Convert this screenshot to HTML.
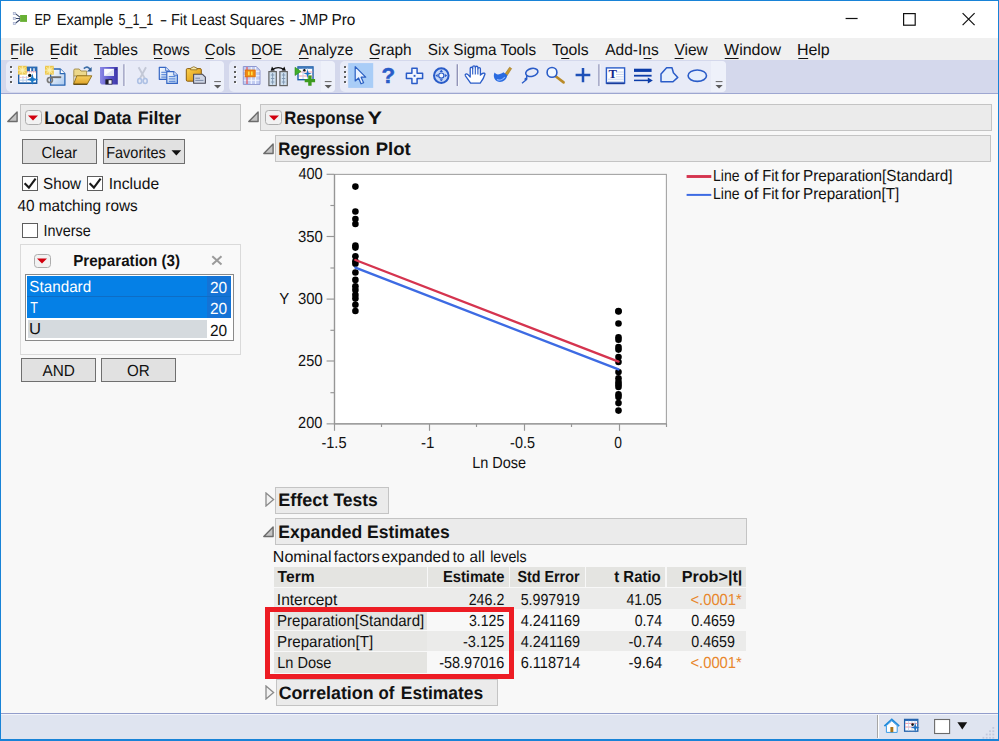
<!DOCTYPE html>
<html lang="en"><head><meta charset="utf-8"><title>EP Example 5_1_1 - Fit Least Squares - JMP Pro</title>
<style>
html,body{margin:0;padding:0}
body{width:999px;height:741px;overflow:hidden;position:relative;background:#f8f8f8;font-family:"Liberation Sans", sans-serif;}
#w{position:absolute;left:0;top:0;width:999px;height:741px;overflow:hidden}
#w div,#w svg{position:absolute;box-sizing:border-box}
.t{position:absolute;left:0;white-space:nowrap;line-height:20px;height:20px;transform-origin:0 0;text-rendering:geometricPrecision}
.t u{text-decoration:underline;text-decoration-thickness:1px;text-underline-offset:2.5px}
</style></head><body><div id="w">
<div style="left:0px;top:0px;width:999px;height:38px;background:#fff"></div>
<div style="left:0px;top:38px;width:999px;height:22px;background:#f0f0f0"></div>
<div style="left:0px;top:60px;width:999px;height:34px;background:#d4d8ec;border-bottom:1px solid #9ea7d1"></div>
<div style="left:6px;top:61px;width:218px;height:31px;background:#e8ebf7;border-radius:5px"></div>
<div style="left:210px;top:61px;width:14px;height:31px;background:#eef1fa;border-radius:0 4px 4px 0"></div>
<div style="left:10px;top:66px;width:2px;height:2px;background:#5e5e5e;box-shadow:1px 1px 0 #fbfbfe"></div>
<div style="left:10px;top:71px;width:2px;height:2px;background:#5e5e5e;box-shadow:1px 1px 0 #fbfbfe"></div>
<div style="left:10px;top:76px;width:2px;height:2px;background:#5e5e5e;box-shadow:1px 1px 0 #fbfbfe"></div>
<div style="left:10px;top:81px;width:2px;height:2px;background:#5e5e5e;box-shadow:1px 1px 0 #fbfbfe"></div>
<svg style="left:213px;top:79px" width="11" height="11" viewBox="0 0 11 11"><rect x="1.20" y="2" width="6.8" height="1.1" fill="#707070"/><path d="M1.00 5.9h7.2l-3.6 3.6z" fill="#5c5c5c"/></svg>
<div style="left:229px;top:61px;width:106px;height:31px;background:#e8ebf7;border-radius:5px"></div>
<div style="left:321px;top:61px;width:14px;height:31px;background:#eef1fa;border-radius:0 4px 4px 0"></div>
<div style="left:234px;top:66px;width:2px;height:2px;background:#5e5e5e;box-shadow:1px 1px 0 #fbfbfe"></div>
<div style="left:234px;top:71px;width:2px;height:2px;background:#5e5e5e;box-shadow:1px 1px 0 #fbfbfe"></div>
<div style="left:234px;top:76px;width:2px;height:2px;background:#5e5e5e;box-shadow:1px 1px 0 #fbfbfe"></div>
<div style="left:234px;top:81px;width:2px;height:2px;background:#5e5e5e;box-shadow:1px 1px 0 #fbfbfe"></div>
<svg style="left:323px;top:79px" width="11" height="11" viewBox="0 0 11 11"><rect x="1.80" y="2" width="6.8" height="1.1" fill="#707070"/><path d="M1.60 5.9h7.2l-3.6 3.6z" fill="#5c5c5c"/></svg>
<div style="left:340px;top:61px;width:386px;height:31px;background:#e8ebf7;border-radius:5px"></div>
<div style="left:711px;top:61px;width:15px;height:31px;background:#eef1fa;border-radius:0 4px 4px 0"></div>
<div style="left:344px;top:66px;width:2px;height:2px;background:#5e5e5e;box-shadow:1px 1px 0 #fbfbfe"></div>
<div style="left:344px;top:71px;width:2px;height:2px;background:#5e5e5e;box-shadow:1px 1px 0 #fbfbfe"></div>
<div style="left:344px;top:76px;width:2px;height:2px;background:#5e5e5e;box-shadow:1px 1px 0 #fbfbfe"></div>
<div style="left:344px;top:81px;width:2px;height:2px;background:#5e5e5e;box-shadow:1px 1px 0 #fbfbfe"></div>
<svg style="left:714px;top:79px" width="11" height="11" viewBox="0 0 11 11"><rect x="1.70" y="2" width="6.8" height="1.1" fill="#707070"/><path d="M1.50 5.9h7.2l-3.6 3.6z" fill="#5c5c5c"/></svg>
<div style="left:0px;top:713px;width:999px;height:28px;background:#dfe4f0;border-top:1px solid #929dcb"></div>
<div style="left:0px;top:714px;width:999px;height:1px;background:#f3f5fb"></div>
<div style="left:877px;top:715px;width:1px;height:23px;background:#a6a6a6"></div>
<div style="left:878px;top:715px;width:1px;height:23px;background:#fff"></div>
<svg style="left:0;top:60px" width="999" height="33" viewBox="0 60 999 33"><defs><linearGradient id="gPage" x1="0" y1="0" x2="1" y2="1"><stop offset="0" stop-color="#ffffff"/><stop offset="1" stop-color="#a9c8ee"/></linearGradient><linearGradient id="gFold" x1="0" y1="0" x2="0" y2="1"><stop offset="0" stop-color="#f6d062"/><stop offset="1" stop-color="#dfa227"/></linearGradient><linearGradient id="gFlop" x1="0" y1="0" x2="1" y2="0"><stop offset="0" stop-color="#8d8ae6"/><stop offset=".55" stop-color="#5a55cc"/><stop offset="1" stop-color="#3b35a6"/></linearGradient><linearGradient id="gClip" x1="0" y1="0" x2="1" y2="1"><stop offset="0" stop-color="#fbd04f"/><stop offset="1" stop-color="#d9930a"/></linearGradient><radialGradient id="gStar"><stop offset="0" stop-color="#fffbe0"/><stop offset=".5" stop-color="#f4da78"/><stop offset="1" stop-color="#ecc448"/></radialGradient></defs><rect x="348.2" y="63.1" width="25" height="24.8" fill="#a9cdf7"/><rect x="18.7" y="67.3" width="18" height="16" fill="#fff" stroke="#1f5fa9" stroke-width="1.4"/><rect x="26.5" y="67" width="10.2" height="4.3" fill="#2a6bb6"/><path d="M30.6 68.2V71.3M34 68.2V71.3" stroke="#fff" stroke-width="1.3"/><path d="M26.8 71.9H36" stroke="#ef7f8e" stroke-width="1" stroke-dasharray="1.2 .8"/><path d="M19.5 77.4H29" stroke="#f29aa6" stroke-width="1" stroke-dasharray="1.2 .8"/><path d="M19.5 80.2H29M23 76V82.5M26.4 76V82.5" stroke="#b9cdea" stroke-width="1"/><path d="M19 83.2H36.8" stroke="#1c5aa2" stroke-width="1.2"/><rect x="18" y="65.8" width="8.8" height="8.8" fill="url(#gStar)"/><path d="M22.4 65.8V74.6M18 70.2H26.8M18.8 66.6L26 73.8M26 66.6L18.8 73.8" stroke="#fdf0b0" stroke-width=".9" opacity=".85"/><circle cx="29.7" cy="75.4" r="1.7" fill="#111"/><path d="M32.4 73.4L33.6 78.1L38.2 79.5L33.6 80.9L32.2 84.8L31 80.9L27 79.5L31 78.1Z" fill="#1c7ac8"/><path d="M50.6 69H60.2L64.9 73.6V85.2H50.6Z" fill="url(#gPage)" stroke="#2a66b3" stroke-width="1.3" stroke-linejoin="round"/><path d="M60.2 69V73.6H64.9" fill="#fff" stroke="#2a66b3" stroke-width="1.1"/><rect x="45" y="65.8" width="8.8" height="8.8" fill="url(#gStar)"/><path d="M49.4 65.8V74.6M45 70.2H53.8M45.8 66.6L53 73.8M53 66.6L45.8 73.8" stroke="#fdf0b0" stroke-width=".9" opacity=".85"/><circle cx="49.9" cy="80" r="2.5" fill="none" stroke="#7a7a7a" stroke-width="1.7"/><path d="M51 77.2H61.2" stroke="#6c6c6c" stroke-width="1.9"/><path d="M73.8 84V70.3Q73.8 69 75 69H79.2L81 71H86.6V76H73.8" fill="#ecd88c" stroke="#a08a48" stroke-width=".9"/><path d="M76.8 75.8H91.8L87.2 84.2H73.6Z" fill="url(#gFold)" stroke="#8a6a14" stroke-width=".9" stroke-linejoin="round"/><path d="M73.6 84.3H87.2" stroke="#5c4712" stroke-width="1.2"/><path d="M83.8 68.6Q87.4 65.4 90 69.2" fill="none" stroke="#3d6ea8" stroke-width="1.6"/><path d="M91.6 66.9V71.6H86.9Z" fill="#2f5f98"/><path d="M100 67H117.8V84.5H101.6L100 83Z" fill="url(#gFlop)"/><rect x="104.1" y="68.8" width="9.9" height="7.1" fill="#fbfbff"/><path d="M104.1 75.9L114 68.8V75.9Z" fill="#dfe3f3"/><rect x="105.4" y="79.3" width="6.9" height="5.2" fill="#1e1e2c"/><rect x="108.6" y="80.2" width="3" height="3.6" fill="#f2f2fa"/><rect x="115.4" y="68.6" width="1.3" height="1.6" fill="#2a2680"/><path d="M124 64.2V86" stroke="#9294b8" stroke-width="1.4"/><path d="M125.2 64.2V86" stroke="#f4f6fc" stroke-width="1"/><path d="M138.6 67.2L144.9 78.6M146 67.2L139.8 78.6" stroke="#c3c8d6" stroke-width="1.9" fill="none"/><ellipse cx="139.7" cy="81" rx="2" ry="2.5" fill="none" stroke="#adc0e4" stroke-width="1.6"/><ellipse cx="145.2" cy="81" rx="2" ry="2.5" fill="none" stroke="#adc0e4" stroke-width="1.6"/><path d="M159.3 67.3H165.70000000000002L169.3 70.89999999999999V79.3H159.3Z" fill="url(#gPage)" stroke="#3566c4" stroke-width="1.2" stroke-linejoin="round"/><path d="M165.70000000000002 67.3V70.89999999999999H169.3" fill="#e8f0ff" stroke="#3566c4" stroke-width=".9"/><path d="M161.3 72.3H167.3M161.3 74.7H167.3M161.3 77.1H167.3" stroke="#4f7fd6" stroke-width="1"/><path d="M166.8 71.6H173.8L177.4 75.19999999999999V83.39999999999999H166.8Z" fill="url(#gPage)" stroke="#3566c4" stroke-width="1.2" stroke-linejoin="round"/><path d="M173.8 71.6V75.19999999999999H177.4" fill="#e8f0ff" stroke="#3566c4" stroke-width=".9"/><path d="M168.8 76.6H175.4M168.8 78.9H175.4M168.8 81.3H175.4" stroke="#4f7fd6" stroke-width="1"/><rect x="186.3" y="68.6" width="15" height="12.6" rx="1.2" fill="url(#gClip)" stroke="#8a5e10" stroke-width="1"/><path d="M190.6 69.8V68.2Q193.8 65.2 197 68.2V69.8Z" fill="#f3e7b0" stroke="#8a6a20" stroke-width=".8"/><path d="M193.6 74.2H202.3L205.4 77.2V83.2H193.6Z" fill="#cfd6e6" stroke="#4a4a58" stroke-width="1.1" stroke-linejoin="round"/><path d="M195.3 78.2H200M195.3 80.4H203.5" stroke="#7c8aa8" stroke-width="1"/><path d="M243.3 66.5H256.2L260 70.3V84.4H243.3Z" fill="#c2cdf2" stroke="#8f97d0" stroke-width="1"/><path d="M243.8 71.2H259.5M243.8 75.7H259.5M243.8 80.2H259.5M251.3 67V84M255.6 67V84" stroke="#f4f6ff" stroke-width="1.1"/><path d="M247 67V84" stroke="#e8505a" stroke-width="1.2"/><rect x="245.2" y="70" width="10" height="6.8" fill="#f08a12" stroke="#d86a08" stroke-width=".8"/><path d="M248.8 71.6V75.2M251.8 71.6V75.2" stroke="#ffe24a" stroke-width="1.6"/><rect x="268.9" y="71.6" width="7.4" height="14" fill="#cfe0f0" stroke="#636363" stroke-width="1.2"/><path d="M270.9 75H274.29999999999995M270.9 78.5H274.29999999999995M270.9 82H274.29999999999995M272.59999999999997 73V84.5" stroke="#7c93ad" stroke-width=".9"/><rect x="279.9" y="71.6" width="7.4" height="14" fill="#cfe0f0" stroke="#636363" stroke-width="1.2"/><path d="M281.9 75H285.29999999999995M281.9 78.5H285.29999999999995M281.9 82H285.29999999999995M283.59999999999997 73V84.5" stroke="#7c93ad" stroke-width=".9"/><path d="M272.4 69.6Q278.3 65.6 284 69.6" fill="none" stroke="#111" stroke-width="1.3"/><path d="M270.6 70.8L272 66.6L274.8 70.4ZM285.8 70.8L284.4 66.6L281.6 70.4Z" fill="#111"/><rect x="298" y="66.9" width="15" height="12.8" fill="#fff" stroke="#1f5fa9" stroke-width="1.4"/><path d="M298.5 68H312.6" stroke="#2d6cb8" stroke-width="1.5"/><path d="M299 72H312.5M299 76H312.5" stroke="#f29aa6" stroke-width=".9"/><path d="M303 68.5V79M307.5 68.5V79" stroke="#b9cdea" stroke-width=".9"/><circle cx="304.4" cy="70.2" r="1.2" fill="#111"/><path d="M307.6 69.4L308.5 72.7L311.8 73.6L308.5 74.5L307.6 77.8L306.7 74.5L303.4 73.6L306.7 72.7Z" fill="#1c72c4"/><path d="M295 67.3L301 71.4L295 75.5Z" fill="#3fae2a" stroke="#2a8a1c" stroke-width=".6"/><path d="M309.9 75.4V85.8M304.7 80.6H315.1" stroke="#3c9a1e" stroke-width="3.4"/><path d="M355.2 66.6V81L358.6 78L361 83.8L363.6 82.7L361.1 77.2H365.7Z" fill="#e9f1ff" stroke="#2a5fc2" stroke-width="1.2" stroke-linejoin="round"/><text x="381.4" y="83.3" font-family="'Liberation Sans',sans-serif" font-weight="bold" font-size="22.5" fill="#2a5cc8" stroke="#2a5cc8" stroke-width=".5" textLength="13.6" lengthAdjust="spacingAndGlyphs">?</text><path d="M411.9 68.2H417.1V73.2H422.6V78.4H417.1V83.6H411.9V78.4H406.4V73.2H411.9Z" fill="#f2f6ff" stroke="#2a5cc8" stroke-width="1.5" stroke-linejoin="round"/><rect x="413.6" y="74.9" width="1.9" height="1.9" fill="#2a5cc8"/><circle cx="441.3" cy="75.6" r="7.3" fill="#c8d9f7" stroke="#2a5cc8" stroke-width="2"/><circle cx="441.3" cy="75.6" r="2.6" fill="#f4f8ff" stroke="#2a5cc8" stroke-width="1.2"/><path d="M441.3 69.6L443 72H439.6ZM441.3 81.6L443 79.2H439.6ZM435.3 75.6L437.7 73.9V77.3ZM447.3 75.6L444.9 73.9V77.3Z" fill="#2a5cc8"/><path d="M457.3 64.2V86" stroke="#9294b8" stroke-width="1.4"/><path d="M458.5 64.2V86" stroke="#f4f6fc" stroke-width="1"/><path d="M470.6 83.2C468.8 80.4 466.6 77.4 465.4 75.8C464.6 74.4 466.4 73.2 467.7 74.4L470.2 77V68.6C470.2 66.8 472.7 66.8 472.7 68.6V67.2C472.7 65.4 475.3 65.4 475.3 67.2V67.6C475.3 65.8 477.9 65.8 477.9 67.6V68.8C477.9 67.2 480.4 67.2 480.4 68.8V75.2C482 73.2 484.6 72.4 485 74C484.2 77 482.6 80 480.2 83.2Z" fill="#fff" stroke="#2a5cc8" stroke-width="1.3" stroke-linejoin="round"/><path d="M472.7 68.6V74.5M475.3 67.6V74.5M477.9 68.8V74.5" stroke="#2a5cc8" stroke-width="1.1"/><path d="M504.6 74.6L509.6 67.2L511.6 68.6L506.8 76Z" fill="#c99a2e" stroke="#9a7420" stroke-width=".6"/><path d="M494.6 72.6C496.4 75.4 500 74.6 503.4 72.2L507.2 75C507 79.6 503 82.4 498.6 81.8C494.6 81 492.6 76.4 494.6 72.6Z" fill="#2a6be0"/><path d="M497 79.6C499.6 80.8 503.2 79.6 504.8 77" stroke="#8fb8ff" stroke-width="1.1" fill="none"/><ellipse cx="531.8" cy="72.4" rx="6.2" ry="3.9" transform="rotate(-14 531.8 72.4)" fill="none" stroke="#2a5cc8" stroke-width="1.6"/><path d="M527 75.4C526 77 527.6 78.8 526.4 79.8C525 80.8 524.6 78.4 526.2 78.2M526 80L522 83.2" fill="none" stroke="#2a5cc8" stroke-width="1.4"/><path d="M555.6 76.2L563.6 82.4" stroke="#b98a28" stroke-width="2.6" stroke-linecap="round"/><circle cx="552" cy="72.4" r="4.9" fill="#f1f7ff" stroke="#2a5cc8" stroke-width="1.6"/><path d="M583 68V82.2M575.6 75.1H590.3" stroke="#1e50b8" stroke-width="2.5"/><path d="M599 64.2V86" stroke="#9294b8" stroke-width="1.4"/><path d="M600.2 64.2V86" stroke="#f4f6fc" stroke-width="1"/><rect x="606.4" y="67.9" width="18.2" height="15.2" fill="#fff" stroke="#2a5cc8" stroke-width="1.4"/><path d="M616 72H623.8M616 74.4H623.8M616 76.8H623.8M608 79.2H623.8M608 81.4H623.8" stroke="#c8d4ee" stroke-width="1"/><path d="M606.4 83.4H624.6" stroke="#1a3c9c" stroke-width="1.6"/><text x="608.6" y="78" font-family="'Liberation Serif',serif" font-weight="bold" font-size="11.5" fill="#12268c" textLength="8.4" lengthAdjust="spacingAndGlyphs">T</text><path d="M634 70.3H651.6" stroke="#0c3ca8" stroke-width="3.2"/><path d="M634 75.7H651.6" stroke="#0c3ca8" stroke-width="1.8"/><path d="M634 80.4H649" stroke="#0c3ca8" stroke-width="1.5"/><path d="M647.8 77.4L652.8 80.4L647.8 83.4Z" fill="#0c3ca8"/><path d="M661 81.8V74L666.6 67.8H672L673.4 72.8L677.8 77.4L673 81.8Z" fill="#e6effc" stroke="#2a5cc8" stroke-width="1.5" stroke-linejoin="round"/><ellipse cx="697.3" cy="75.7" rx="9.2" ry="5.7" fill="#e6effc" stroke="#2a5cc8" stroke-width="1.6"/></svg>
<svg style="left:880px;top:715px" width="118" height="24" viewBox="880 715 118 24"><path d="M884.4 726.2L891.8 719.4L899.2 726.2" fill="none" stroke="#1f8adb" stroke-width="1.8" stroke-linejoin="miter"/><path d="M886.4 725.6V732.4H897.2V725.6L891.8 720.8Z" fill="#fdfdfd" stroke="#3a9be6" stroke-width="1"/><rect x="890.4" y="727" width="2.9" height="5.2" fill="#a8741a"/><rect x="904.6" y="719.4" width="13.2" height="11.8" fill="#fff" stroke="#1f5fa9" stroke-width="1.3"/><path d="M905 720.3H917.6" stroke="#2d6cb8" stroke-width="1.5"/><path d="M905.2 723.4H917.4M905.2 727H917.4" stroke="#f08a98" stroke-width=".9"/><path d="M908.6 720.8V730.8M912 720.8V730.8M915 720.8V730.8" stroke="#b9cdea" stroke-width=".8"/><circle cx="912.6" cy="724.6" r="1.3" fill="#111"/><path d="M915.2 722.8L916.2 726.4L919.6 727.4L916.2 728.4L915.2 732.4L914.2 728.4L910.8 727.4L914.2 726.4Z" fill="#1c72c4"/><rect x="934.6" y="719.5" width="15" height="14" fill="#fff" stroke="#6a6a6a" stroke-width="1.1"/><path d="M957.4 722.3H967.2L962.3 729.6Z" fill="#111"/><rect x="992.4" y="727.0" width="1.8" height="1.8" fill="#c3c9dc"/><rect x="992.4" y="730.3" width="1.8" height="1.8" fill="#c3c9dc"/><rect x="989.1" y="730.3" width="1.8" height="1.8" fill="#c3c9dc"/><rect x="992.4" y="733.6" width="1.8" height="1.8" fill="#c3c9dc"/><rect x="989.1" y="733.6" width="1.8" height="1.8" fill="#c3c9dc"/><rect x="985.8" y="733.6" width="1.8" height="1.8" fill="#c3c9dc"/><rect x="992.4" y="736.9" width="1.8" height="1.8" fill="#c3c9dc"/><rect x="989.1" y="736.9" width="1.8" height="1.8" fill="#c3c9dc"/><rect x="985.8" y="736.9" width="1.8" height="1.8" fill="#c3c9dc"/><rect x="982.5" y="736.9" width="1.8" height="1.8" fill="#c3c9dc"/></svg>
<svg style="left:12px;top:11px" width="17" height="16" viewBox="0 0 17 16"><path d="M3.4 2.6L8.2 6.4M3.4 7.45H8.2M3.4 12.3L8.2 8.5" stroke="#3b4a6c" stroke-width="1.1" fill="none"/><rect x="1.3" y="1.4" width="2.2" height="2.1" fill="#dfe3f0" stroke="#aab3d0" stroke-width=".8"/><rect x="1.3" y="6.4" width="2.2" height="2.1" fill="#dfe3f0" stroke="#aab3d0" stroke-width=".8"/><rect x="1.3" y="11.4" width="2.2" height="2.1" fill="#dfe3f0" stroke="#aab3d0" stroke-width=".8"/><rect x="8.1" y="4" width="6.9" height="6.9" fill="#68b034"/></svg>
<svg style="left:840px;top:8px" width="150" height="24" viewBox="0 0 150 24"><path d="M5.6 10.5H17.6" stroke="#111" stroke-width="1.2"/><rect x="63.6" y="5.6" width="11.6" height="11.6" fill="none" stroke="#111" stroke-width="1.2"/><path d="M122.6 5.2L134.6 17.2M134.6 5.2L122.6 17.2" stroke="#111" stroke-width="1.2"/></svg>
<svg style="left:10px;top:57px" width="10" height="3" viewBox="10 57 10 3"><rect x="11.3" y="58" width="6.8" height="1" fill="#111"/></svg>
<svg style="left:50px;top:57px" width="10" height="3" viewBox="50 57 10 3"><rect x="51" y="58" width="6.8" height="1" fill="#111"/></svg>
<svg style="left:93px;top:57px" width="11" height="3" viewBox="93 57 11 3"><rect x="94" y="58" width="7.6" height="1" fill="#111"/></svg>
<svg style="left:153px;top:57px" width="12" height="3" viewBox="153 57 12 3"><rect x="154" y="58" width="8.2" height="1" fill="#111"/></svg>
<svg style="left:204px;top:57px" width="12" height="3" viewBox="204 57 12 3"><rect x="205.7" y="58" width="8.1" height="1" fill="#111"/></svg>
<svg style="left:251px;top:57px" width="13" height="3" viewBox="251 57 13 3"><rect x="252.3" y="58" width="9.0" height="1" fill="#111"/></svg>
<svg style="left:298px;top:57px" width="13" height="3" viewBox="298 57 13 3"><rect x="299" y="58" width="9.6" height="1" fill="#111"/></svg>
<svg style="left:368px;top:57px" width="13" height="3" viewBox="368 57 13 3"><rect x="369.6" y="58" width="9.6" height="1" fill="#111"/></svg>
<svg style="left:560px;top:57px" width="12" height="3" viewBox="560 57 12 3"><rect x="561.2" y="58" width="8.1" height="1" fill="#111"/></svg>
<svg style="left:642px;top:57px" width="11" height="3" viewBox="642 57 11 3"><rect x="643.7" y="58" width="7.8" height="1" fill="#111"/></svg>
<svg style="left:673px;top:57px" width="13" height="3" viewBox="673 57 13 3"><rect x="674.6" y="58" width="9.0" height="1" fill="#111"/></svg>
<svg style="left:723px;top:57px" width="17" height="3" viewBox="723 57 17 3"><rect x="724.7" y="58" width="13.9" height="1" fill="#111"/></svg>
<svg style="left:797px;top:57px" width="13" height="3" viewBox="797 57 13 3"><rect x="798.3" y="58" width="9.9" height="1" fill="#111"/></svg>
<svg style="left:7.1px;top:111.3px" width="12" height="12" viewBox="0 0 12 12"><path d="M10.1 1.1V10.5H0.8Z" fill="#c4c4c4" stroke="#6c6c6c" stroke-width="1.4" stroke-linejoin="round"/></svg>
<div style="left:20px;top:104px;width:221px;height:27px;background:#ebebeb;border:1px solid #c4c4c4"></div>
<div style="left:24.6px;top:110.3px;width:17.3px;height:14.5px;background:#f2f2f2;border:1.3px solid #adadad;border-radius:3.5px"></div>
<svg style="left:28.25px;top:114.55px" width="10" height="6" viewBox="0 0 10 6"><path d="M0 0.4H10L5 5.5Z" fill="#d2000e"/></svg>
<div style="left:22px;top:139.3px;width:75px;height:24.5px;background:#e1e1e1;border:1px solid #6f6f6f"></div>
<div style="left:103px;top:139.3px;width:82px;height:24.5px;background:#e1e1e1;border:1px solid #6f6f6f"></div>
<svg style="left:170.5px;top:149.5px" width="11" height="6" viewBox="0 0 11 6"><path d="M0.5 0.3H10.2L5.35 5.4Z" fill="#111"/></svg>
<div style="left:22px;top:176px;width:16px;height:15px;background:#fff;border:1px solid #5e5e5e"></div>
<svg style="left:22px;top:176px" width="16" height="15" viewBox="0 0 16 15"><path d="M2.6 7.3L6.9 11.6L13.6 2.6" fill="none" stroke="#1a1a1a" stroke-width="2.1"/></svg>
<div style="left:87px;top:176px;width:16px;height:15px;background:#fff;border:1px solid #5e5e5e"></div>
<svg style="left:87px;top:176px" width="16" height="15" viewBox="0 0 16 15"><path d="M2.6 7.3L6.9 11.6L13.6 2.6" fill="none" stroke="#1a1a1a" stroke-width="2.1"/></svg>
<div style="left:22px;top:223px;width:16px;height:15px;background:#fff;border:1px solid #5e5e5e"></div>
<div style="left:20px;top:244px;width:221px;height:111px;background:#f9f9f9;border:1px solid #dadada"></div>
<div style="left:33.8px;top:253.6px;width:17px;height:14px;background:#f2f2f2;border:1.3px solid #adadad;border-radius:3.5px"></div>
<svg style="left:37.30px;top:257.60px" width="10" height="6" viewBox="0 0 10 6"><path d="M0 0.4H10L5 5.5Z" fill="#d2000e"/></svg>
<svg style="left:210.5px;top:255px" width="12" height="11" viewBox="0 0 12 11"><path d="M1.3 1.2L10.5 9.4M10.5 1.2L1.3 9.4" stroke="#9b9b9b" stroke-width="2"/></svg>
<div style="left:25px;top:273.7px;width:209px;height:67.7px;background:#fff;border:1px solid #8a8a8a"></div>
<div style="left:27px;top:275.8px;width:204.3px;height:42.2px;background:#0580e6"></div>
<div style="left:207.3px;top:275.8px;width:24px;height:42.2px;background:#1473d6"></div>
<div style="left:27px;top:296px;width:204.3px;height:1px;background:#0d6dc6"></div>
<div style="left:27.8px;top:320px;width:179.5px;height:18.3px;background:#d5dade"></div>
<div style="left:21.3px;top:357.5px;width:74.3px;height:24.3px;background:#e1e1e1;border:1px solid #6f6f6f"></div>
<div style="left:100.8px;top:357.5px;width:74.8px;height:24.3px;background:#e1e1e1;border:1px solid #6f6f6f"></div>
<svg style="left:248px;top:111.3px" width="12" height="12" viewBox="0 0 12 12"><path d="M10.1 1.1V10.5H0.8Z" fill="#c4c4c4" stroke="#6c6c6c" stroke-width="1.4" stroke-linejoin="round"/></svg>
<div style="left:260.4px;top:104px;width:731.6px;height:27px;background:#ebebeb;border:1px solid #c4c4c4"></div>
<div style="left:265.1px;top:110.3px;width:17.3px;height:14.5px;background:#f2f2f2;border:1.3px solid #adadad;border-radius:3.5px"></div>
<svg style="left:268.75px;top:114.55px" width="10" height="6" viewBox="0 0 10 6"><path d="M0 0.4H10L5 5.5Z" fill="#d2000e"/></svg>
<svg style="left:263.2px;top:142.6px" width="12" height="12" viewBox="0 0 12 12"><path d="M10.1 1.1V10.5H0.8Z" fill="#c4c4c4" stroke="#6c6c6c" stroke-width="1.4" stroke-linejoin="round"/></svg>
<div style="left:275px;top:135px;width:716px;height:27px;background:#ebebeb;border:1px solid #c4c4c4"></div>
<svg style="left:264.6px;top:492.3px" width="10" height="15" viewBox="0 0 10 15"><path d="M1 1L8.6 7.5L1 14Z" fill="#f2f2f2" stroke="#8a8a8a" stroke-width="1.3" stroke-linejoin="miter"/></svg>
<div style="left:275.1px;top:487px;width:114.4px;height:27px;background:#ebebeb;border:1px solid #c4c4c4"></div>
<svg style="left:263.2px;top:525.6px" width="12" height="12" viewBox="0 0 12 12"><path d="M10.1 1.1V10.5H0.8Z" fill="#c4c4c4" stroke="#6c6c6c" stroke-width="1.4" stroke-linejoin="round"/></svg>
<div style="left:275.1px;top:518px;width:471.7px;height:27px;background:#ebebeb;border:1px solid #c4c4c4"></div>
<svg style="left:264.6px;top:685.3px" width="10" height="15" viewBox="0 0 10 15"><path d="M1 1L8.6 7.5L1 14Z" fill="#f2f2f2" stroke="#8a8a8a" stroke-width="1.3" stroke-linejoin="miter"/></svg>
<div style="left:276px;top:679px;width:222px;height:27px;background:#ebebeb;border:1px solid #c4c4c4"></div>
<svg style="left:0;top:0" width="999" height="741" viewBox="0 0 999 741"><rect x="334.5" y="174.4" width="331.9" height="249.4" fill="#fff" stroke="#a4a4a4" stroke-width="1.1"/><path d="M334.5 174V424.4M334 423.85H667" stroke="#969696" stroke-width="1.3" fill="none"/><path d="M326.6 174.3H334" stroke="#969696" stroke-width="1.15"/><path d="M326.6 236.5H334" stroke="#969696" stroke-width="1.15"/><path d="M326.6 299.1H334" stroke="#969696" stroke-width="1.15"/><path d="M326.6 361.0H334" stroke="#969696" stroke-width="1.15"/><path d="M326.6 423.85H334" stroke="#969696" stroke-width="1.15"/><path d="M330.4 205.5H334" stroke="#969696" stroke-width="1.15"/><path d="M330.4 268.0H334" stroke="#969696" stroke-width="1.15"/><path d="M330.4 330.3H334" stroke="#969696" stroke-width="1.15"/><path d="M330.4 392.7H334" stroke="#969696" stroke-width="1.15"/><path d="M334.5 424V430.8" stroke="#969696" stroke-width="1.15"/><path d="M429.5 424V430.8" stroke="#969696" stroke-width="1.15"/><path d="M524.5 424V430.8" stroke="#969696" stroke-width="1.15"/><path d="M619.5 424V430.8" stroke="#969696" stroke-width="1.15"/><path d="M381.5 424V427" stroke="#969696" stroke-width="1.15"/><path d="M476.5 424V427" stroke="#969696" stroke-width="1.15"/><path d="M571.5 424V427" stroke="#969696" stroke-width="1.15"/><path d="M666.5 424V427" stroke="#969696" stroke-width="1.15"/><circle cx="355.4" cy="186.6" r="3.3" fill="#000"/><circle cx="355.4" cy="211.5" r="3.3" fill="#000"/><circle cx="355.4" cy="219.0" r="3.3" fill="#000"/><circle cx="355.4" cy="224.0" r="3.3" fill="#000"/><circle cx="355.4" cy="245.6" r="3.3" fill="#000"/><circle cx="355.4" cy="247.6" r="3.3" fill="#000"/><circle cx="355.4" cy="256.3" r="3.3" fill="#000"/><circle cx="355.4" cy="261.3" r="3.3" fill="#000"/><circle cx="355.4" cy="263.8" r="3.3" fill="#000"/><circle cx="355.4" cy="272.5" r="3.3" fill="#000"/><circle cx="355.4" cy="279.9" r="3.3" fill="#000"/><circle cx="355.4" cy="286.2" r="3.3" fill="#000"/><circle cx="355.4" cy="289.9" r="3.3" fill="#000"/><circle cx="355.4" cy="294.9" r="3.3" fill="#000"/><circle cx="355.4" cy="298.6" r="3.3" fill="#000"/><circle cx="355.4" cy="304.8" r="3.3" fill="#000"/><circle cx="355.4" cy="311.0" r="3.3" fill="#000"/><circle cx="618.5" cy="311.0" r="3.3" fill="#000"/><circle cx="618.5" cy="311.5" r="3.3" fill="#000"/><circle cx="618.5" cy="323.5" r="3.3" fill="#000"/><circle cx="618.5" cy="337.2" r="3.3" fill="#000"/><circle cx="618.5" cy="339.7" r="3.3" fill="#000"/><circle cx="618.5" cy="347.1" r="3.3" fill="#000"/><circle cx="618.5" cy="349.6" r="3.3" fill="#000"/><circle cx="618.5" cy="357.1" r="3.3" fill="#000"/><circle cx="618.5" cy="362.0" r="3.3" fill="#000"/><circle cx="618.5" cy="372.0" r="3.3" fill="#000"/><circle cx="618.5" cy="378.2" r="3.3" fill="#000"/><circle cx="618.5" cy="381.9" r="3.3" fill="#000"/><circle cx="618.5" cy="384.4" r="3.3" fill="#000"/><circle cx="618.5" cy="386.9" r="3.3" fill="#000"/><circle cx="618.5" cy="394.4" r="3.3" fill="#000"/><circle cx="618.5" cy="396.9" r="3.3" fill="#000"/><circle cx="618.5" cy="403.1" r="3.3" fill="#000"/><circle cx="618.5" cy="410.6" r="3.3" fill="#000"/><path d="M355.4 260.0L618.5 361.6" stroke="#d5344f" stroke-width="2.4" stroke-linecap="round" fill="none"/><path d="M355.4 267.7L618.5 369.4" stroke="#3d6be3" stroke-width="2.4" stroke-linecap="round" fill="none"/><path d="M686.6 176.5H711.3" stroke="#d5344f" stroke-width="2.9"/><path d="M686.6 194.9H711.3" stroke="#3d6be3" stroke-width="2"/></svg>
<div style="left:274.4px;top:567.2px;width:152.20000000000005px;height:19.5px;background:#e4e4e1"></div>
<div style="left:428.3px;top:567.2px;width:80.30000000000001px;height:19.5px;background:#e4e4e1"></div>
<div style="left:510.4px;top:567.2px;width:74.20000000000005px;height:19.5px;background:#e4e4e1"></div>
<div style="left:586px;top:567.2px;width:79.29999999999995px;height:19.5px;background:#e4e4e1"></div>
<div style="left:667px;top:567.2px;width:79.20000000000005px;height:19.5px;background:#e4e4e1"></div>
<div style="left:274.4px;top:588.2px;width:471.8px;height:20.8px;background:#ebebea"></div>
<div style="left:274.4px;top:630.5px;width:471.8px;height:20.8px;background:#ebebea"></div>
<div style="left:274.4px;top:609.2px;width:152.2px;height:21.2px;background:#e4e4e1"></div>
<div style="left:274.4px;top:630.5px;width:152.2px;height:20.8px;background:#e7e7e5"></div>
<div style="left:274.4px;top:651.5px;width:152.2px;height:21.5px;background:#e4e4e1"></div>
<div style="left:265.3px;top:607px;width:248.8px;height:71.8px;border:5px solid #ed1c24;z-index:5"></div>
<div style="left:0px;top:0px;width:999px;height:1px;background:#1883d7"></div>
<div style="left:0px;top:0px;width:1px;height:741px;background:#1883d7"></div>
<div style="left:998px;top:0px;width:1px;height:741px;background:#1883d7"></div>
<div style="left:0px;top:739px;width:999px;height:2px;background:#1883d7"></div>
<span class="t" style="top:11px;font-size:16px;color:#111;transform:translateX(34.40px) scaleX(0.7822);">EP </span>
<span class="t" style="top:11px;font-size:16px;color:#111;transform:translateX(56.76px) scaleX(0.9084);">Example </span>
<span class="t" style="top:11px;font-size:16px;color:#111;transform:translateX(118.54px) scaleX(0.7818);">5_1_1 </span>
<span class="t" style="top:11px;font-size:16px;color:#111;transform:translateX(159.76px) scaleX(1.4131);">- </span>
<span class="t" style="top:11px;font-size:16px;color:#111;transform:translateX(170.98px) scaleX(0.9043);">Fit </span>
<span class="t" style="top:11px;font-size:16px;color:#111;transform:translateX(191.24px) scaleX(0.8787);">Least </span>
<span class="t" style="top:11px;font-size:16px;color:#111;transform:translateX(229.52px) scaleX(0.9195);">Squares </span>
<span class="t" style="top:11px;font-size:16px;color:#111;transform:translateX(289.15px) scaleX(1.2808);">- </span>
<span class="t" style="top:11px;font-size:16px;color:#111;transform:translateX(299.44px) scaleX(0.8971);">JMP </span>
<span class="t" style="top:11px;font-size:16px;color:#111;transform:translateX(331.43px) scaleX(0.9627);">Pro</span>
<span class="t" style="top:41px;font-size:16px;color:#111;transform:translateX(10.10px) scaleX(0.9329);">File</span>
<span class="t" style="top:41px;font-size:16px;color:#111;transform:translateX(49.49px) scaleX(1.0141);">Edit</span>
<span class="t" style="top:41px;font-size:16px;color:#111;transform:translateX(93.49px) scaleX(0.9581);">Tables</span>
<span class="t" style="top:41px;font-size:16px;color:#111;transform:translateX(152.54px) scaleX(0.9292);">Rows</span>
<span class="t" style="top:41px;font-size:16px;color:#111;transform:translateX(204.56px) scaleX(0.9698);">Cols</span>
<span class="t" style="top:41px;font-size:16px;color:#111;transform:translateX(250.98px) scaleX(0.9028);">DOE</span>
<span class="t" style="top:41px;font-size:16px;color:#111;transform:translateX(298.49px) scaleX(0.9613);">Analyze</span>
<span class="t" style="top:41px;font-size:16px;color:#111;transform:translateX(368.89px) scaleX(0.9607);">Graph</span>
<span class="t" style="top:41px;font-size:16px;color:#111;transform:translateX(427.82px) scaleX(0.9540);">Six Sigma Tools</span>
<span class="t" style="top:41px;font-size:16px;color:#111;transform:translateX(551.93px) scaleX(0.9843);">Tools</span>
<span class="t" style="top:41px;font-size:16px;color:#111;transform:translateX(605.26px) scaleX(0.9690);">Add-Ins</span>
<span class="t" style="top:41px;font-size:16px;color:#111;transform:translateX(674.40px) scaleX(0.9710);">View</span>
<span class="t" style="top:41px;font-size:16px;color:#111;transform:translateX(724.08px) scaleX(0.9991);">Window</span>
<span class="t" style="top:41px;font-size:16px;color:#111;transform:translateX(796.88px) scaleX(0.9992);">Help</span>
<span class="t" style="top:108px;font-size:18px;font-weight:bold;color:#111;transform:translateX(44.19px) scaleX(0.9469);">Local </span>
<span class="t" style="top:108px;font-size:18px;font-weight:bold;color:#111;transform:translateX(93.60px) scaleX(0.9706);">Data </span>
<span class="t" style="top:108px;font-size:18px;font-weight:bold;color:#111;transform:translateX(137.79px) scaleX(0.9827);">Filter</span>
<span class="t" style="top:144px;font-size:16px;color:#111;transform:translateX(41.61px) scaleX(0.9289);">Clear</span>
<span class="t" style="top:144px;font-size:16px;color:#111;transform:translateX(106.17px) scaleX(0.9055);">Favorites</span>
<span class="t" style="top:175px;font-size:16px;color:#111;transform:translateX(43.10px) scaleX(0.9488);">Show</span>
<span class="t" style="top:175px;font-size:16px;color:#111;transform:translateX(108.74px) scaleX(0.9760);">Include</span>
<span class="t" style="top:197px;font-size:16px;color:#111;transform:translateX(17.47px) scaleX(0.9590);">40 matching rows</span>
<span class="t" style="top:222px;font-size:16px;color:#111;transform:translateX(43.40px) scaleX(0.9016);">Inverse</span>
<span class="t" style="top:252px;font-size:16px;font-weight:bold;color:#111;transform:translateX(73.21px) scaleX(0.9463);">Preparation (3)</span>
<span class="t" style="top:278px;font-size:16px;color:#fff;transform:translateX(29.37px) scaleX(0.9512);">Standard</span>
<span class="t" style="top:299px;font-size:16px;color:#fff;transform:translateX(30.22px) scaleX(0.7836);">T</span>
<span class="t" style="top:320px;font-size:16px;color:#111;transform:translateX(29.04px) scaleX(1.0392);">U</span>
<span class="t" style="top:279px;font-size:16px;color:#fff;transform:translateX(210.02px) scaleX(0.9651);">20</span>
<span class="t" style="top:300px;font-size:16px;color:#fff;transform:translateX(210.02px) scaleX(0.9651);">20</span>
<span class="t" style="top:322px;font-size:16px;color:#111;transform:translateX(210.02px) scaleX(0.9651);">20</span>
<span class="t" style="top:362px;font-size:16px;color:#111;transform:translateX(42.49px) scaleX(0.9613);">AND</span>
<span class="t" style="top:362px;font-size:16px;color:#111;transform:translateX(127.09px) scaleX(0.9462);">OR</span>
<span class="t" style="top:108px;font-size:18px;font-weight:bold;color:#111;transform:translateX(284.32px) scaleX(0.9295);">Response </span>
<span class="t" style="top:108px;font-size:18px;font-weight:bold;color:#111;transform:translateX(367.41px) scaleX(1.2084);">Y</span>
<span class="t" style="top:139px;font-size:18px;font-weight:bold;color:#111;transform:translateX(278.32px) scaleX(0.9340);">Regression </span>
<span class="t" style="top:139px;font-size:18px;font-weight:bold;color:#111;transform:translateX(375.67px) scaleX(1.0297);">Plot</span>
<span class="t" style="top:490px;font-size:18px;font-weight:bold;color:#111;transform:translateX(278.15px) scaleX(1.0005);">Effect </span>
<span class="t" style="top:490px;font-size:18px;font-weight:bold;color:#111;transform:translateX(333.39px) scaleX(0.9703);">Tests</span>
<span class="t" style="top:522px;font-size:18px;font-weight:bold;color:#111;transform:translateX(278.23px) scaleX(0.9753);">Expanded </span>
<span class="t" style="top:522px;font-size:18px;font-weight:bold;color:#111;transform:translateX(367.02px) scaleX(0.9713);">Estimates</span>
<span class="t" style="top:683px;font-size:18px;font-weight:bold;color:#111;transform:translateX(278.65px) scaleX(0.9882);">Correlation </span>
<span class="t" style="top:683px;font-size:18px;font-weight:bold;color:#111;transform:translateX(378.57px) scaleX(0.9329);">of </span>
<span class="t" style="top:683px;font-size:18px;font-weight:bold;color:#111;transform:translateX(400.82px) scaleX(0.9689);">Estimates</span>
<span class="t" style="top:165px;font-size:16px;color:#111;transform:translateX(298.38px) scaleX(0.9085);">400</span>
<span class="t" style="top:228px;font-size:16px;color:#111;transform:translateX(297.90px) scaleX(0.9305);">350</span>
<span class="t" style="top:290px;font-size:16px;color:#111;transform:translateX(297.90px) scaleX(0.9305);">300</span>
<span class="t" style="top:352px;font-size:16px;color:#111;transform:translateX(298.12px) scaleX(0.9055);">250</span>
<span class="t" style="top:414px;font-size:16px;color:#111;transform:translateX(298.12px) scaleX(0.9055);">200</span>
<span class="t" style="top:290px;font-size:16px;color:#111;transform:translateX(279.16px) scaleX(0.9341);">Y</span>
<span class="t" style="top:434px;font-size:16px;color:#111;transform:translateX(321.41px) scaleX(0.9108);">-1.5</span>
<span class="t" style="top:434px;font-size:16px;color:#111;transform:translateX(420.92px) scaleX(0.9441);">-1</span>
<span class="t" style="top:434px;font-size:16px;color:#111;transform:translateX(510.10px) scaleX(0.8993);">-0.5</span>
<span class="t" style="top:434px;font-size:16px;color:#111;transform:translateX(614.24px) scaleX(0.8622);">0</span>
<span class="t" style="top:454px;font-size:16px;color:#111;transform:translateX(472.14px) scaleX(0.9067);">Ln Dose</span>
<span class="t" style="top:167px;font-size:16px;color:#111;transform:translateX(712.99px) scaleX(0.8766);">Line </span>
<span class="t" style="top:167px;font-size:16px;color:#111;transform:translateX(744.11px) scaleX(1.0700);">of </span>
<span class="t" style="top:167px;font-size:16px;color:#111;transform:translateX(762.19px) scaleX(0.9280);">Fit </span>
<span class="t" style="top:167px;font-size:16px;color:#111;transform:translateX(781.40px) scaleX(0.9916);">for </span>
<span class="t" style="top:167px;font-size:16px;color:#111;transform:translateX(803.04px) scaleX(0.9553);">Preparation[Standard]</span>
<span class="t" style="top:185px;font-size:16px;color:#111;transform:translateX(712.99px) scaleX(0.8766);">Line </span>
<span class="t" style="top:185px;font-size:16px;color:#111;transform:translateX(744.11px) scaleX(1.0700);">of </span>
<span class="t" style="top:185px;font-size:16px;color:#111;transform:translateX(762.19px) scaleX(0.9280);">Fit </span>
<span class="t" style="top:185px;font-size:16px;color:#111;transform:translateX(781.40px) scaleX(0.9916);">for </span>
<span class="t" style="top:185px;font-size:16px;color:#111;transform:translateX(803.04px) scaleX(0.9482);">Preparation[T]</span>
<span class="t" style="top:548px;font-size:16px;color:#111;transform:translateX(272.84px) scaleX(0.9994);">Nominal </span>
<span class="t" style="top:548px;font-size:16px;color:#111;transform:translateX(333.83px) scaleX(0.9525);">factors </span>
<span class="t" style="top:548px;font-size:16px;color:#111;transform:translateX(381.61px) scaleX(0.9710);">expanded </span>
<span class="t" style="top:548px;font-size:16px;color:#111;transform:translateX(452.75px) scaleX(0.8846);">to </span>
<span class="t" style="top:548px;font-size:16px;color:#111;transform:translateX(469.60px) scaleX(0.9557);">all </span>
<span class="t" style="top:548px;font-size:16px;color:#111;transform:translateX(490.17px) scaleX(0.8910);">levels</span>
<span class="t" style="top:568px;font-size:16px;font-weight:bold;color:#111;transform:translateX(277.56px) scaleX(0.9780);">Term</span>
<span class="t" style="top:568px;font-size:16px;font-weight:bold;color:#111;transform:translateX(442.88px) scaleX(0.9222);">Estimate</span>
<span class="t" style="top:568px;font-size:16px;font-weight:bold;color:#111;transform:translateX(517.46px) scaleX(0.8943);">Std Error</span>
<span class="t" style="top:568px;font-size:16px;font-weight:bold;color:#111;transform:translateX(614.22px) scaleX(0.9339);">t Ratio</span>
<span class="t" style="top:568px;font-size:16px;font-weight:bold;color:#111;transform:translateX(681.69px) scaleX(1.0097);">Prob&gt;|t|</span>
<span class="t" style="top:591px;font-size:16px;color:#111;transform:translateX(276.81px) scaleX(0.9714);">Intercept</span>
<span class="t" style="top:591px;font-size:16px;color:#111;transform:translateX(468.68px) scaleX(0.8909);">246.2</span>
<span class="t" style="top:591px;font-size:16px;color:#111;transform:translateX(520.67px) scaleX(0.8890);">5.997919</span>
<span class="t" style="top:591px;font-size:16px;color:#111;transform:translateX(626.38px) scaleX(0.8825);">41.05</span>
<span class="t" style="top:591px;font-size:16px;color:#e8872c;transform:translateX(690.39px) scaleX(0.9252);">&lt;.0001*</span>
<span class="t" style="top:612px;font-size:16px;color:#111;transform:translateX(277.09px) scaleX(0.9395);">Preparation[Standard]</span>
<span class="t" style="top:612px;font-size:16px;color:#111;transform:translateX(469.03px) scaleX(0.8805);">3.125</span>
<span class="t" style="top:612px;font-size:16px;color:#111;transform:translateX(520.72px) scaleX(0.9055);">4.241169</span>
<span class="t" style="top:612px;font-size:16px;color:#111;transform:translateX(634.63px) scaleX(0.8796);">0.74</span>
<span class="t" style="top:612px;font-size:16px;color:#111;transform:translateX(691.28px) scaleX(0.8919);">0.4659</span>
<span class="t" style="top:633px;font-size:16px;color:#111;transform:translateX(277.04px) scaleX(0.9475);">Preparation[T]</span>
<span class="t" style="top:633px;font-size:16px;color:#111;transform:translateX(463.00px) scaleX(0.9102);">-3.125</span>
<span class="t" style="top:633px;font-size:16px;color:#111;transform:translateX(520.72px) scaleX(0.9055);">4.241169</span>
<span class="t" style="top:633px;font-size:16px;color:#111;transform:translateX(628.53px) scaleX(0.9266);">-0.74</span>
<span class="t" style="top:633px;font-size:16px;color:#111;transform:translateX(691.28px) scaleX(0.8919);">0.4659</span>
<span class="t" style="top:654px;font-size:16px;color:#111;transform:translateX(277.14px) scaleX(0.9113);">Ln Dose</span>
<span class="t" style="top:654px;font-size:16px;color:#111;transform:translateX(439.20px) scaleX(0.9036);">-58.97016</span>
<span class="t" style="top:654px;font-size:16px;color:#111;transform:translateX(520.72px) scaleX(0.9086);">6.118714</span>
<span class="t" style="top:654px;font-size:16px;color:#111;transform:translateX(628.53px) scaleX(0.9266);">-9.64</span>
<span class="t" style="top:654px;font-size:16px;color:#e8872c;transform:translateX(690.39px) scaleX(0.9252);">&lt;.0001*</span>
</div></body></html>
